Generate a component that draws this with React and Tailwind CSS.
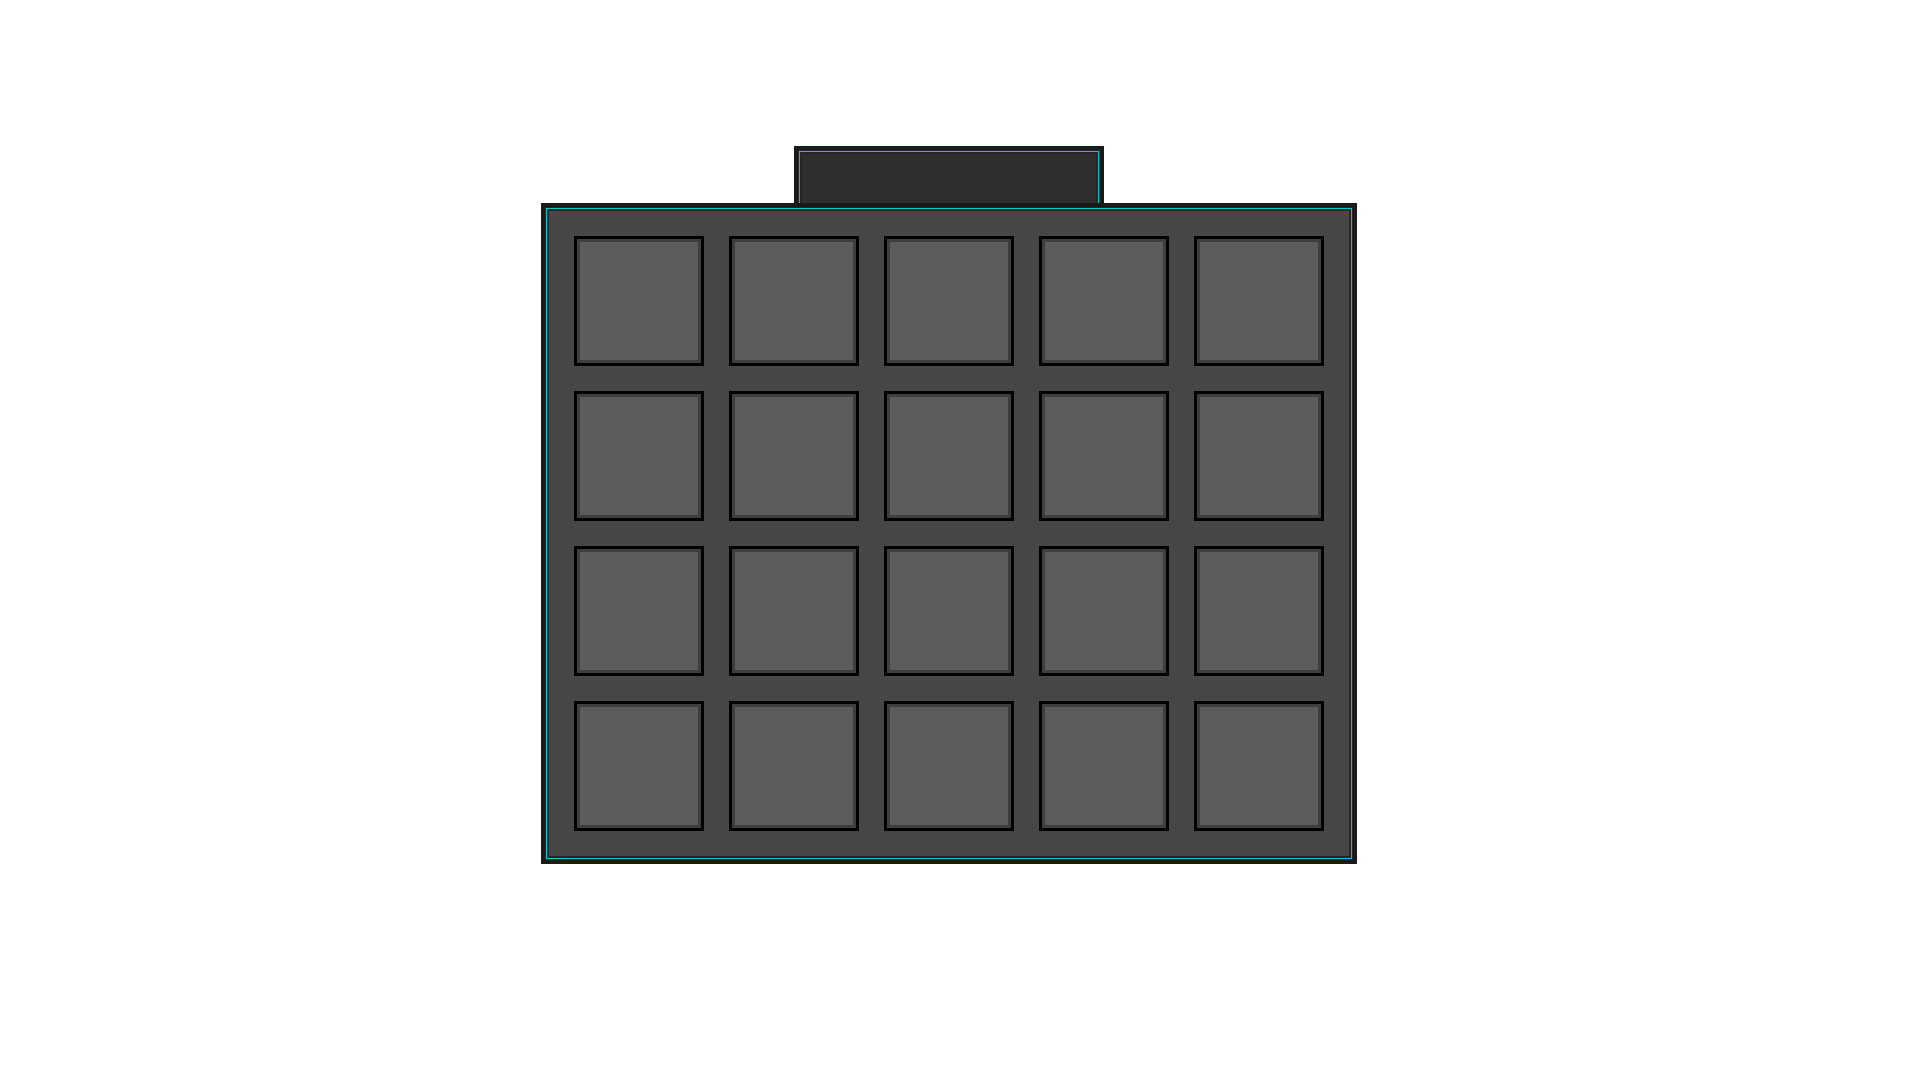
export default function App() {
  const cells = Array.from({ length: 20 });
  return (
    <div className="min-h-screen w-full bg-white pt-[146px] pl-[541px]" style={{ fontFamily: '"Liberation Sans", sans-serif' }}>
      <div className="flex w-[816px] flex-col items-center">
        <div className="h-[57px] w-[310px] border-4 border-b-0 border-[#1a1a1a] bg-[#262626] px-px pt-px">
          <div className="h-full border border-b-0 border-[#00c8d0] px-[2px] pt-[2px]">
            <div className="h-full bg-[#2e2e2e]" />
          </div>
        </div>
        <div className="w-[816px] border-4 border-[#1a1a1a] bg-[#262626] p-px">
          <div className="border border-[#00c8d0] p-[2px]">
            <div className="grid grid-cols-[repeat(5,130px)] gap-[25px] bg-[#464646] p-[25px]">
              {cells.map((_, i) => (
                <div key={i} className="h-[130px] w-[130px] border-[3px] border-black bg-[#3e3e3e] p-[3px]">
                  <div className="h-full w-full bg-[#5c5c5c]" />
                </div>
              ))}
            </div>
          </div>
        </div>
      </div>
    </div>
  );
}
